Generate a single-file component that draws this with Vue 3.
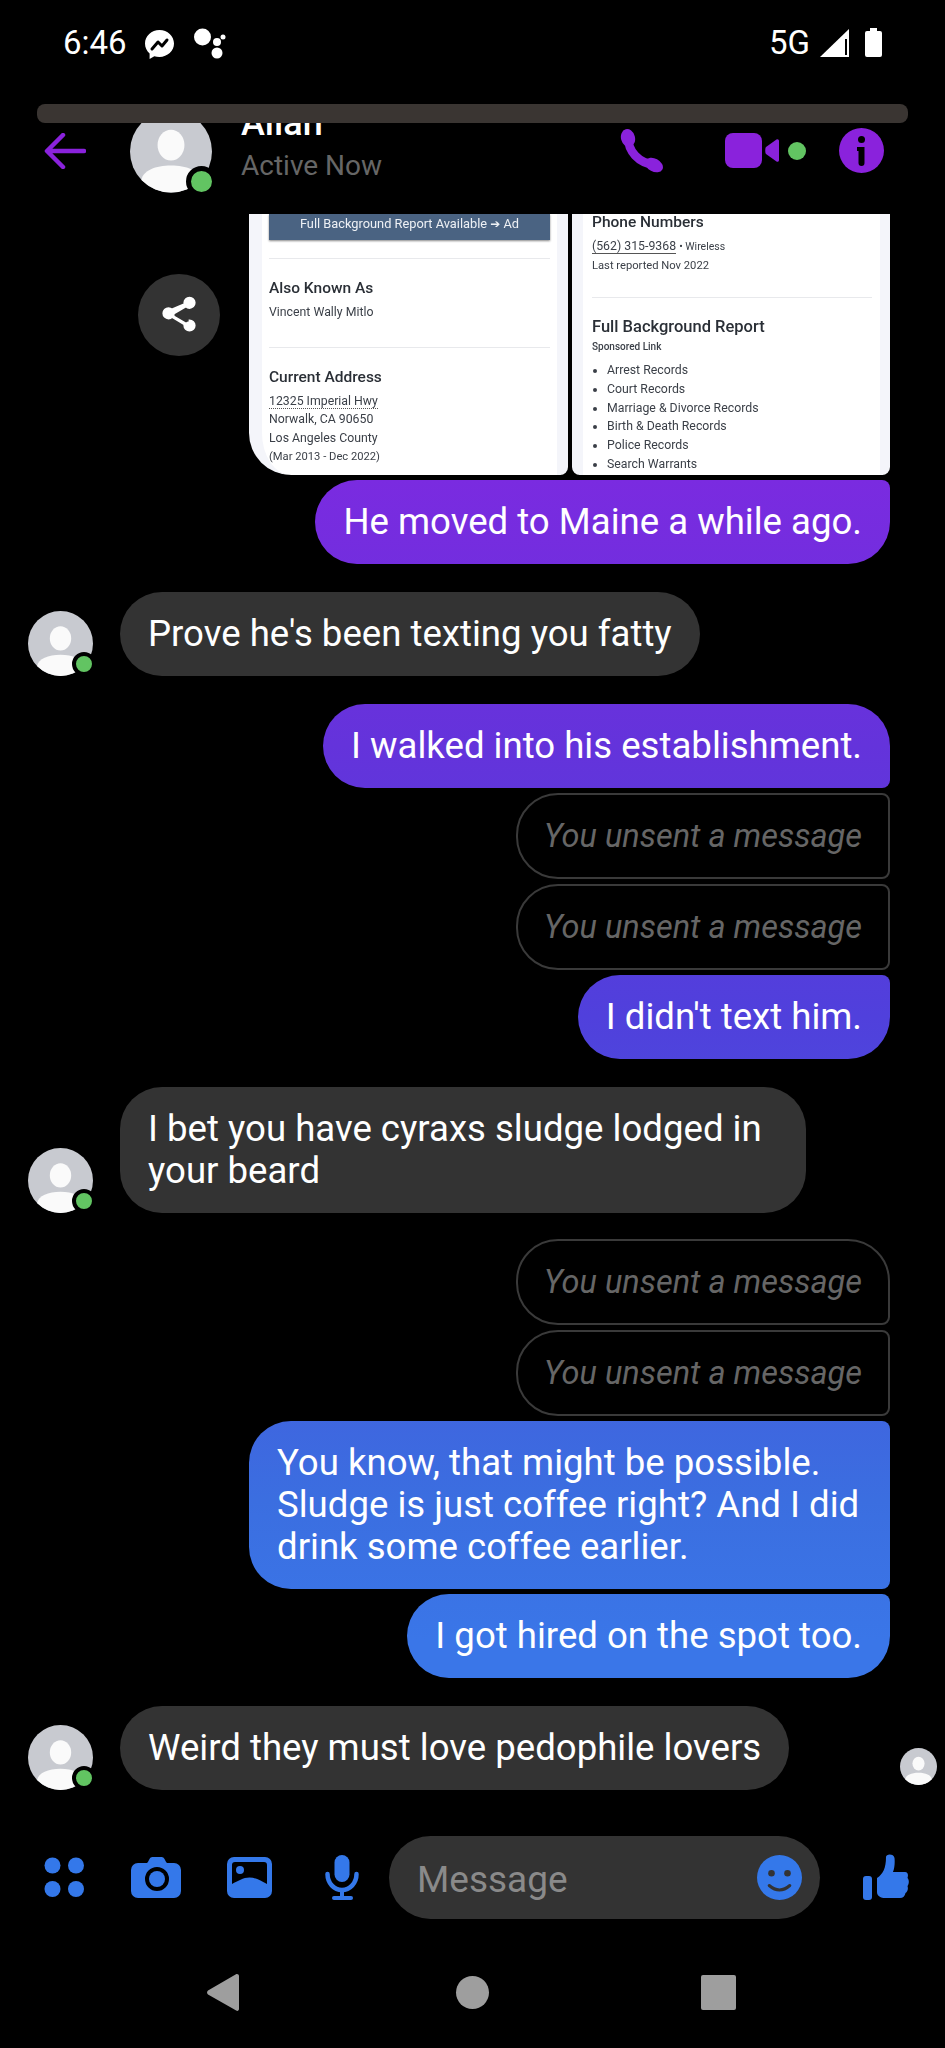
<script setup>
const messages = [
  { id: 1, mine: true, text: 'He moved to Maine a while ago.', shape: 'last' },
  { id: 2, mine: false, text: "Prove he's been texting you fatty", gap: true },
  { id: 3, mine: true, text: 'I walked into his establishment.', shape: 'first', gap: true },
  { id: 4, mine: true, text: 'You unsent a message', shape: 'mid', unsent: true },
  { id: 5, mine: true, text: 'You unsent a message', shape: 'mid', unsent: true },
  { id: 6, mine: true, text: "I didn't text him.", shape: 'last' },
  { id: 7, mine: false, text: 'I bet you have cyraxs sludge lodged in your beard', gap: true },
  { id: 8, mine: true, text: 'You unsent a message', shape: 'first', unsent: true, gapSmall: true },
  { id: 9, mine: true, text: 'You unsent a message', shape: 'mid', unsent: true },
  { id: 10, mine: true, text: 'You know, that might be possible. Sludge is just coffee right? And I did drink some coffee earlier.', shape: 'mid' },
  { id: 11, mine: true, text: 'I got hired on the spot too.', shape: 'last' },
  { id: 12, mine: false, text: 'Weird they must love pedophile lovers', gap: true, seen: true },
]

const records = ['Arrest Records', 'Court Records', 'Marriage & Divorce Records', 'Birth & Death Records', 'Police Records', 'Search Warrants']
</script>

<template>
  <div class="phone">
    <svg class="defs" width="0" height="0">
      <symbol id="person" viewBox="0 0 64 64">
        <circle cx="32" cy="32" r="32" fill="#c8cad0" />
        <ellipse cx="32" cy="27" rx="10.500" ry="12" fill="#fafafa" />
        <path d="M9 54.200C10 47 20 43 32 43s22 4 23 11.200a32 32 0 0 1-46 0z" fill="#fafafa" />
      </symbol>
    </svg>

    <!-- status bar -->
    <div class="status">
      <span class="time">6:46</span>
      <svg class="st-msg" viewBox="0 0 29 31" width="29" height="31">
        <path d="M14.500 2C6.500 2 0 8 0 15.600c0 4 1.800 7.500 4.600 10V31l4.700-2.800c1.600.5 3.400.8 5.200.8 8 0 14.500-6 14.500-13.400S22.500 2 14.500 2z" fill="#fff" />
        <path d="M7 21l6-7 4 4 5-6" fill="none" stroke="#000" stroke-width="3" stroke-linecap="round" stroke-linejoin="round" />
      </svg>
      <svg class="st-dots" viewBox="0 0 32 31" width="32" height="31">
        <circle cx="8.500" cy="9" r="8.500" fill="#fff" />
        <circle cx="29" cy="9" r="2.500" fill="#fff" />
        <circle cx="23" cy="14" r="4" fill="#fff" />
        <circle cx="23" cy="25" r="5.500" fill="#fff" />
      </svg>
      <span class="net">5G</span>
      <svg class="st-signal" viewBox="0 0 29 28" width="29" height="28">
        <path d="M29 0v28H0z" fill="#fff" />
        <path d="M25 10h2v16h-2z" fill="#000" />
      </svg>
      <svg class="st-battery" viewBox="0 0 17 29" width="17" height="29">
        <path d="M5 0h7v3h3a2 2 0 0 1 2 2v22a2 2 0 0 1-2 2H2a2 2 0 0 1-2-2V5a2 2 0 0 1 2-2h3z" fill="#fff" />
      </svg>
    </div>

    <div class="scroll-bar"></div>

    <!-- conversation header -->
    <header class="chat-head">
      <svg class="back" viewBox="0 0 42 36" width="42" height="36">
        <path d="M40 18H4M19 2L3 18l16 16" fill="none" stroke="#8a22dc" stroke-width="4.500" stroke-linecap="round" stroke-linejoin="round" />
      </svg>
      <div class="head-avatar">
        <svg width="82" height="83"><use href="#person" /></svg>
        <span class="head-dot"></span>
      </div>
      <div class="who">
        <div class="name">Allan</div>
        <div class="active">Active Now</div>
      </div>
      <div class="actions">
        <svg class="a-phone" viewBox="0 0 44 44" width="44" height="44">
          <path d="M8 8C8 22 18 34 35 36" fill="none" stroke="#8a22dc" stroke-width="8.500" stroke-linecap="round" />
          <ellipse cx="8" cy="9" rx="7" ry="9" transform="rotate(-15 8 9)" fill="#8a22dc" />
          <ellipse cx="34" cy="36" rx="9.500" ry="6.500" transform="rotate(28 34 36)" fill="#8a22dc" />
        </svg>
        <svg class="a-video" viewBox="0 0 54 35" width="54" height="35">
          <rect x="0" y="0" width="37" height="35" rx="8" fill="#8a22dc" />
          <path d="M41 14l10.500-7.500c1.200-.8 2.500 0 2.500 1.500v19c0 1.500-1.300 2.300-2.500 1.500L41 21c-1-.8-1-6.200 0-7z" fill="#8a22dc" />
        </svg>
        <span class="a-dot"></span>
        <svg class="a-info" viewBox="0 0 45 45" width="45" height="45">
          <circle cx="22.500" cy="22.500" r="22.500" fill="#8a22dc" />
          <circle cx="22.500" cy="11.500" r="3.500" fill="#000" />
          <path d="M18 19h7.500v16a3 3 0 0 1-6 0V23H18z" fill="#000" />
        </svg>
      </div>
    </header>

    <main class="thread">
      <!-- shared report screenshots -->
      <div class="row mine shots">
        <button class="share">
          <svg viewBox="0 0 24 24" width="42" height="42">
            <path d="M18 16.100c-.8 0-1.500.3-2 .8l-7.100-4.200c.1-.2.100-.5.100-.7s0-.5-.1-.7L16 7.200c.5.500 1.200.8 2 .8 1.700 0 3-1.300 3-3s-1.300-3-3-3-3 1.300-3 3c0 .2 0 .5.100.7L8 8.800C7.500 8.300 6.800 8 6 8c-1.700 0-3 1.300-3 3s1.300 3 3 3c.8 0 1.500-.3 2-.8l7.100 4.200c-.1.200-.1.400-.1.600 0 1.600 1.300 2.900 3 2.900s3-1.300 3-2.900-1.300-2.900-3-2.900z" fill="#fff" stroke="#fff" stroke-width="1" />
          </svg>
        </button>
        <div class="shot shot-left">
          <div class="ad-band">Full Background Report Available <span class="arrow">➔</span> Ad</div>
          <hr class="rule first-rule" />
          <h4>Also Known As</h4>
          <p>Vincent Wally Mitlo</p>
          <hr class="rule" />
          <h4>Current Address</h4>
          <p><span class="dotted">12325 Imperial Hwy</span></p>
          <p>Norwalk, CA 90650</p>
          <p>Los Angeles County</p>
          <p class="tiny">(Mar 2013 - Dec 2022)</p>
        </div>
        <div class="shot shot-right">
          <h4 class="phones">Phone Numbers</h4>
          <p><span class="solid">(562) 315-9368</span> <span class="wireless">• Wireless</span></p>
          <p class="tiny">Last reported Nov 2022</p>
          <hr class="rule" />
          <h4>Full Background Report</h4>
          <p class="sponsored">Sponsored Link</p>
          <ul>
            <li v-for="r in records" :key="r">{{ r }}</li>
          </ul>
        </div>
      </div>

      <div
        v-for="m in messages"
        :key="m.id"
        class="row"
        :class="{ mine: m.mine, gap: m.gap, 'gap-small': m.gapSmall }"
      >
        <svg v-if="!m.mine" class="msg-avatar" width="65" height="65"><use href="#person" /></svg>
        <span v-if="!m.mine" class="msg-dot"></span>
        <div
          class="bubble"
          :class="[m.shape, { unsent: m.unsent, them: !m.mine, me: m.mine && !m.unsent }]"
        >{{ m.text }}</div>
        <svg v-if="m.seen" class="seen" width="37" height="37"><use href="#person" /></svg>
      </div>
    </main>

    <!-- composer -->
    <div class="composer">
      <svg viewBox="0 0 40 41" width="40" height="41" class="c-grid">
        <circle cx="8.500" cy="8.500" r="8" /><circle cx="32" cy="8.500" r="8" />
        <circle cx="8.500" cy="32" r="8" /><circle cx="32" cy="32" r="8" />
      </svg>
      <svg viewBox="0 0 50 41" width="50" height="41" class="c-cam">
        <path fill-rule="evenodd" d="M7 6h8c1 0 1.600-.6 2.200-1.600L18.500 2c.7-1.200 1.500-2 3-2h9c1.500 0 2.300.8 3 2l1.300 2.400c.6 1 1.200 1.600 2.200 1.600h6a7 7 0 0 1 7 7v21a7 7 0 0 1-7 7H7a7 7 0 0 1-7-7V13a7 7 0 0 1 7-7zm19 4a12 12 0 1 0 0 24 12 12 0 0 0 0-24z" />
        <circle cx="26" cy="22" r="8" />
      </svg>
      <svg viewBox="0 0 45 41" width="45" height="41" class="c-img">
        <path fill-rule="evenodd" d="M7 0h31a7 7 0 0 1 7 7v27a7 7 0 0 1-7 7H7a7 7 0 0 1-7-7V7a7 7 0 0 1 7-7zm1 5a3 3 0 0 0-3 3v19c6-3 11-6.500 17.500-6.500S34 24 40 27V8a3 3 0 0 0-3-3z" />
        <circle cx="13" cy="13" r="4" />
      </svg>
      <svg viewBox="0 0 36 45" width="36" height="45" class="c-mic">
        <rect x="10.500" y="0" width="15" height="27" rx="7.500" />
        <path d="M3.500 19c0 9 6.500 16 14.500 16s14.500-7 14.500-16" fill="none" stroke="#3478ea" stroke-width="4.500" stroke-linecap="round" />
        <path d="M16 35h4v6h-4z" />
        <rect x="8" y="41" width="21" height="4" rx="2" />
      </svg>
      <div class="input">
        <span class="placeholder">Message</span>
        <svg viewBox="0 0 45 45" width="45" height="45">
          <circle cx="22.500" cy="22.500" r="22.500" />
          <circle cx="14.500" cy="18.200" r="3.300" fill="#333" />
          <circle cx="30.500" cy="18.200" r="3.300" fill="#333" />
          <path d="M12.200 30.500Q22.500 39.500 32.800 30.500" fill="none" stroke="#333" stroke-width="3" stroke-linecap="round" />
        </svg>
      </div>
      <svg viewBox="0 0 46 47" width="46" height="47" class="c-thumb">
        <rect x="0" y="22" width="9" height="24" rx="3" />
        <path d="M14 24C20 20 23 14 23 3c0-3.500 8-3.500 8.500 1C32 9 31.500 14 30 18h12c3 0 3.500 3 2.500 6 2 2 1.500 6 0 8 1 3 0 6-2 7-.5 3-2.500 5-5.500 5H22c-4 0-8-2-8-6z" />
      </svg>
    </div>

    <!-- android nav -->
    <nav class="nav">
      <svg viewBox="0 0 32 37" width="32" height="37">
        <path d="M30 0c1 0 2 .8 2 2v33c0 1.500-1.500 2.500-2.800 1.500L1 20.500c-1.300-1-1.300-3 0-4L29 .3c.3-.2.6-.3 1-.3z" fill="#9e9e9e" />
      </svg>
      <span class="nav-home"></span>
      <span class="nav-recent"></span>
    </nav>
  </div>
</template>

<style>
html, body {
  background: #000;
}
</style>

<style scoped>
.phone {
  width: 945px;
  height: 2048px;
  background: #000;
  color: #fff;
  font-family: Roboto, "Liberation Sans", sans-serif;
  overflow: hidden;
}

.defs {
  position: absolute;
}

/* status bar */
.status {
  height: 104px;
  box-sizing: border-box;
  padding: 28px 63px 0 63px;
  display: flex;
  align-items: flex-start;
}

.time,
.net {
  font-size: 33px;
  line-height: 30px;
  font-weight: 400;
}

.st-msg {
  margin-left: 18px;
}

.st-dots {
  margin-left: 20px;
}

.net {
  margin-left: auto;
}

.st-signal {
  margin-left: 10px;
  margin-top: 1px;
}

.st-battery {
  margin-left: 16px;
}

.scroll-bar {
  height: 19px;
  margin: 0 37px;
  background: #3a3532;
  border-radius: 8px;
}

/* header */
.chat-head {
  height: 91px;
  padding-left: 44px;
  display: flex;
  align-items: flex-start;
  overflow: hidden;
}

.back {
  margin-top: 10px;
}

.head-avatar {
  position: relative;
  margin: -13px 0 0 44px;
  width: 82px;
  height: 83px;
}

.head-dot {
  position: absolute;
  right: -5px;
  bottom: -4px;
  width: 21px;
  height: 21px;
  border-radius: 50%;
  background: #62c462;
  border: 5px solid #000;
}

.who {
  margin-left: 29px;
}

.name {
  margin-top: -18px;
  font-size: 36px;
  line-height: 36px;
  font-weight: 500;
}

.active {
  margin-top: 8px;
  font-size: 28px;
  line-height: 34px;
  color: #666;
}

.actions {
  margin-left: auto;
  padding-right: 61px;
  height: 55px;
  display: flex;
  align-items: center;
}

.a-video {
  margin-left: 61px;
}

.a-dot {
  width: 18px;
  height: 18px;
  margin-left: 9px;
  border-radius: 50%;
  background: #62c462;
}

.a-info {
  margin-left: 33px;
}

/* thread */
.thread {
  height: 1622px;
  box-sizing: border-box;
  padding: 0 55px 0 28px;
  overflow: hidden;
}

.row {
  position: relative;
  display: flex;
  align-items: flex-end;
  margin-top: 5px;
}

.row.gap {
  margin-top: 28px;
}

.row.gap-small {
  margin-top: 26px;
}

.row.mine {
  justify-content: flex-end;
}

.msg-avatar {
  flex: none;
  margin-right: 27px;
}

.msg-dot {
  position: absolute;
  left: 44px;
  bottom: 0;
  width: 16px;
  height: 16px;
  border-radius: 50%;
  background: #62c462;
  border: 4px solid #000;
}

.bubble {
  box-sizing: border-box;
  padding: 21px 28px;
  max-width: 686px;
  font-size: 36.600px;
  line-height: 42px;
  border-radius: 42px;
}

.them {
  background: #333;
}

.me {
  max-width: 641px;
  background: linear-gradient(180deg, #7a2be0 0, #7a2be0 480px, #6433db 745px, #5040dc 1016px, #3b6ee0 1500px, #3a76e8 1640px) fixed;
}

.bubble.first {
  border-bottom-right-radius: 8px;
}

.bubble.mid {
  padding-right: 20px;
  border-top-right-radius: 8px;
  border-bottom-right-radius: 8px;
}

.bubble.last {
  border-top-right-radius: 8px;
}

.bubble.unsent {
  padding: 20px 26px;
  border: 2px solid #3a3a3a;
  color: #666;
  font-size: 32.500px;
  font-style: italic;
}

.seen {
  margin-left: auto;
  margin-right: -47px;
  margin-bottom: 5px;
}

/* screenshots */
.shots {
  align-items: flex-start;
  margin-top: 0;
  height: 261px;
}

.share {
  width: 82px;
  height: 82px;
  margin: 60px 29px 0 0;
  padding: 0;
  border: 0;
  border-radius: 50%;
  background: #333;
  display: flex;
  align-items: center;
  justify-content: center;
}

.shot {
  height: 261px;
  box-sizing: border-box;
  overflow: hidden;
  background: #fff;
  color: #3a3f47;
  font-size: 12.300px;
  line-height: 18.700px;
  filter: blur(0.35px);
}

.shot h4 {
  margin: 0 0 4px;
  color: #2a2f36;
  font-size: 15.500px;
  line-height: 22px;
  font-weight: 500;
}

.shot p {
  margin: 0;
}

.shot .tiny {
  font-size: 11.200px;
}

.shot-left {
  width: 319px;
  margin-right: 4px;
  padding: 0 7px 0 7px;
  border-left: 13px solid #f4f5fa;
  border-right: 11px solid #f4f5fa;
  border-radius: 0 0 8px 42px;
}

.shot-right {
  width: 318px;
  padding: 0 8px 0 9px;
  border-left: 11px solid #f4f5fa;
  border-right: 10px solid #f4f5fa;
  border-radius: 0 0 8px 8px;
}

.ad-band {
  height: 26px;
  background: #4a6382;
  color: #eef1f5;
  font-size: 12.800px;
  line-height: 20px;
  text-align: center;
  box-shadow: 0 1px 2px #888;
}

.arrow {
  font-size: 12px;
  font-family: "DejaVu Sans", sans-serif;
}

.rule {
  margin: 0;
  border: 0;
  border-top: 1px solid #e8e9ec;
}

.first-rule {
  margin-top: 18px;
}

.shot-left h4 {
  margin-top: 18px;
}

.shot-left p + .rule {
  margin-top: 25px;
}

.dotted {
  border-bottom: 1px dotted #555;
}

.solid {
  border-bottom: 1px solid #555;
}

.wireless {
  font-size: 10.500px;
}

.shot h4.phones {
  margin: -3px 0 0;
}

.phones + p {
  margin-top: 4px;
}

.shot-right .rule {
  margin-top: 22px;
}

.shot-right .rule + h4 {
  margin: 18px 0 0;
  font-size: 16.500px;
}

.shot .sponsored {
  font-size: 10px;
  font-weight: 500;
}

.shot-right ul {
  margin: 4px 0 0;
  padding: 0 0 0 15px;
}

/* composer */
.composer {
  height: 83px;
  display: flex;
  align-items: center;
  fill: #3478ea;
}

.c-grid {
  margin-left: 44px;
}

.c-cam {
  margin-left: 47px;
}

.c-img {
  margin-left: 46px;
}

.c-mic {
  margin-left: 52px;
}

.input {
  width: 431px;
  height: 83px;
  margin-left: 29px;
  box-sizing: border-box;
  padding: 0 18px 0 28px;
  background: #333;
  border-radius: 42px;
  display: flex;
  align-items: center;
  justify-content: space-between;
}

.placeholder {
  font-size: 37px;
  line-height: 42px;
  margin-top: 4px;
  color: #8a8a8a;
}

.c-thumb {
  margin-left: 43px;
}

/* nav bar */
.nav {
  height: 37px;
  margin-top: 55px;
  padding-left: 207px;
  display: flex;
  align-items: center;
}

.nav-home {
  width: 33px;
  height: 33px;
  margin-left: 217px;
  border-radius: 50%;
  background: #9e9e9e;
}

.nav-recent {
  width: 35px;
  height: 35px;
  margin-left: 212px;
  border-radius: 2px;
  background: #9e9e9e;
}
</style>
